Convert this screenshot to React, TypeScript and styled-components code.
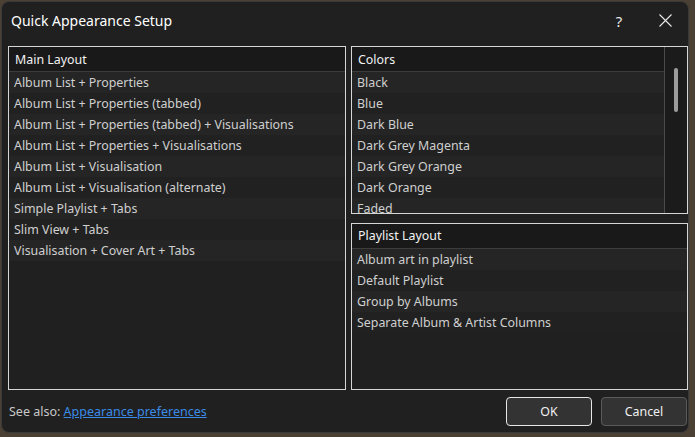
import styled, { createGlobalStyle } from "styled-components"

const GlobalStyle = createGlobalStyle`
  html, body {
    margin: 0;
    padding: 0;
    background: #4a4034;
  }
  body {
    font-family: "Noto Sans", "Open Sans", sans-serif;
  }
`

const Screen = styled.div`
  width: 695px;
  height: 437px;
  box-sizing: border-box;
  padding: 1px 6px 4px 1px;
  display: flex;
`

const Window = styled.div`
  flex: 1;
  display: flex;
  flex-direction: column;
  background: #202020;
  border: 1px solid #3a3a3a;
  border-radius: 8px;
  overflow: hidden;
`

const TitleBar = styled.div`
  height: 37px;
  display: flex;
  align-items: center;
  padding-left: 9px;
  padding-bottom: 7px;
`

const TitleText = styled.div`
  flex: 1;
  color: #ffffff;
  font-size: 14px;
`

const TitleButton = styled.div`
  width: 46px;
  height: 36px;
  display: flex;
  align-items: center;
  justify-content: center;
  color: #e8e8e8;
  font-size: 15px;
`

const Body = styled.div`
  flex: 1;
  display: flex;
  flex-direction: column;
  padding: 0 1px 0 6px;
`

const Panes = styled.div`
  height: 344px;
  display: grid;
  grid-template-columns: 338px 337px;
  column-gap: 5px;
`

const Column = styled.div`
  display: flex;
  flex-direction: column;
  gap: 9px;
`

const Pane = styled.div`
  flex: 1;
  min-height: 0;
  border: 1px solid #d6d6d6;
  display: flex;
  overflow: hidden;
`

const ListArea = styled.div`
  flex: 1;
  display: flex;
  flex-direction: column;
  overflow: hidden;
`

const Header = styled.div`
  height: 24px;
  flex-shrink: 0;
  display: flex;
  align-items: center;
  padding-left: 6px;
  background: #191919;
  border-bottom: 1px solid #3c3c3c;
  color: #f2f2f2;
  font-size: 12.4px;
`

const Row = styled.div<{ $odd: boolean }>`
  height: 21px;
  flex-shrink: 0;
  display: flex;
  align-items: center;
  padding-left: 5px;
  background: ${(p) => (p.$odd ? "#252525" : "#212121")};
  color: #cfcfcf;
  font-size: 12.4px;
  white-space: nowrap;
`

const ScrollTrack = styled.div`
  width: 22px;
  flex-shrink: 0;
  border-left: 1px solid #4a4a4a;
  background: #1b1b1b;
  display: flex;
  justify-content: center;
  padding-top: 21px;
`

const ScrollThumb = styled.div`
  width: 4px;
  height: 44px;
  border-radius: 2px;
  background: #9c9c9c;
`

const Footer = styled.div`
  flex: 1;
  display: flex;
  align-items: center;
  padding-top: 1px;
  gap: 9px;
`

const SeeAlso = styled.div`
  flex: 1;
  color: #c8c8c8;
  font-size: 12.5px;
  padding-left: 1px;
`

const Link = styled.a`
  color: #3b8be6;
  text-decoration: underline;
`

const Button = styled.button<{ $default?: boolean }>`
  width: 86px;
  height: 29px;
  border-radius: 4px;
  background: #333333;
  border: 1px solid ${(p) => (p.$default ? "#e6e6e6" : "#5a5a5a")};
  color: #f0f0f0;
  font-family: inherit;
  font-size: 12.4px;
`

const mainLayouts = [
  "Album List + Properties",
  "Album List + Properties (tabbed)",
  "Album List + Properties (tabbed) + Visualisations",
  "Album List + Properties + Visualisations",
  "Album List + Visualisation",
  "Album List + Visualisation (alternate)",
  "Simple Playlist + Tabs",
  "Slim View + Tabs",
  "Visualisation + Cover Art + Tabs",
]

const colors = [
  "Black",
  "Blue",
  "Dark Blue",
  "Dark Grey Magenta",
  "Dark Grey Orange",
  "Dark Orange",
  "Faded",
]

const playlistLayouts = [
  "Album art in playlist",
  "Default Playlist",
  "Group by Albums",
  "Separate Album & Artist Columns",
]

const List = ({ title, items }: { title: string; items: string[] }) => (
  <ListArea>
    <Header>{title}</Header>
    {items.map((item, i) => (
      <Row key={item} $odd={i % 2 === 0}>
        {item}
      </Row>
    ))}
  </ListArea>
)

const CloseIcon = () => (
  <svg width="13" height="13" viewBox="0 0 13 13">
    <path d="M0.5 0.5 L12.5 12.5 M12.5 0.5 L0.5 12.5" stroke="#e8e8e8" strokeWidth="1.1" fill="none" />
  </svg>
)

export default function App() {
  return (
    <>
      <GlobalStyle />
      <Screen>
        <Window>
          <TitleBar>
            <TitleText>Quick Appearance Setup</TitleText>
            <TitleButton>?</TitleButton>
            <TitleButton>
              <CloseIcon />
            </TitleButton>
          </TitleBar>
          <Body>
            <Panes>
              <Pane>
                <List title="Main Layout" items={mainLayouts} />
              </Pane>
              <Column>
                <Pane>
                  <List title="Colors" items={colors} />
                  <ScrollTrack>
                    <ScrollThumb />
                  </ScrollTrack>
                </Pane>
                <Pane>
                  <List title="Playlist Layout" items={playlistLayouts} />
                </Pane>
              </Column>
            </Panes>
            <Footer>
              <SeeAlso>
                See also: <Link href="#">Appearance preferences</Link>
              </SeeAlso>
              <Button $default>OK</Button>
              <Button>Cancel</Button>
            </Footer>
          </Body>
        </Window>
      </Screen>
    </>
  )
}
